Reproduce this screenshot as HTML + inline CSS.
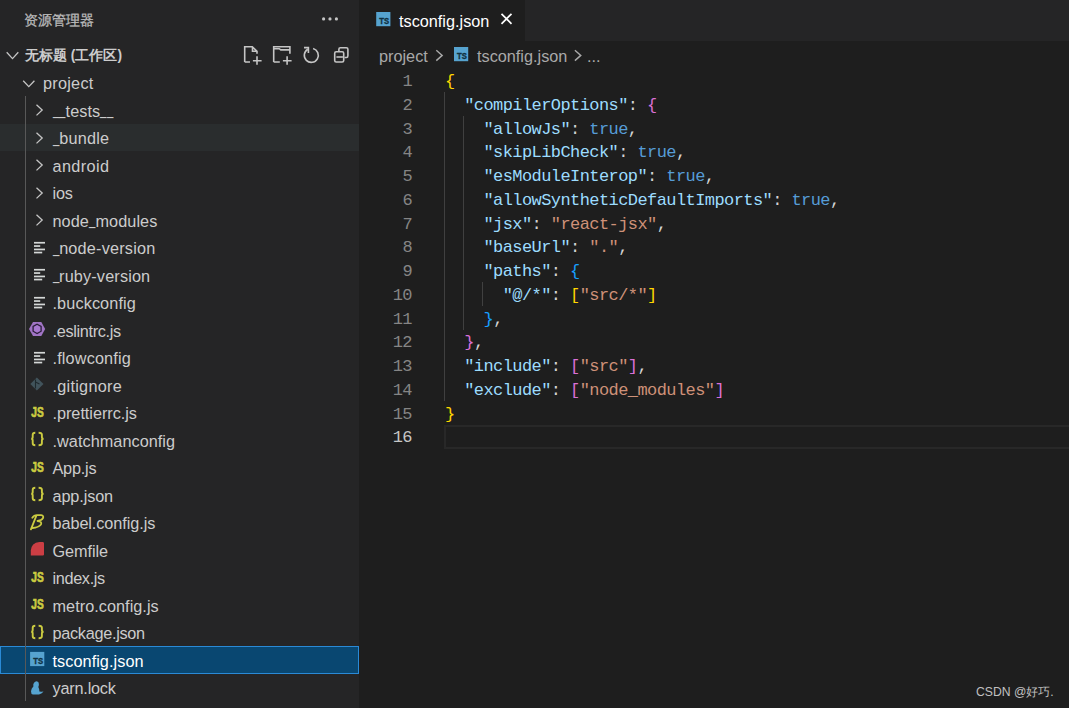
<!DOCTYPE html>
<html><head><meta charset="utf-8">
<style>
*{box-sizing:border-box;margin:0;padding:0}
html,body{width:1069px;height:708px;overflow:hidden;background:#1e1e1e;font-family:"Liberation Sans",sans-serif}
#side{position:absolute;left:0;top:0;width:359px;height:708px;background:#252526}
.t{position:absolute;white-space:pre}
.row{position:absolute;left:0;width:359px;height:27.5px}
.name{position:absolute;top:1.5px;line-height:27.5px;font-size:16.25px;color:#cccccc;white-space:pre}
.code{position:absolute;left:445px;font-family:"Liberation Mono",monospace;font-size:17px;letter-spacing:-0.58px;line-height:23.75px;white-space:pre;color:#d4d4d4;padding-top:1.5px}
.ln{position:absolute;font-family:"Liberation Mono",monospace;font-size:17px;letter-spacing:-0.58px;line-height:23.75px;text-align:right;width:60px;left:352px;padding-top:1.5px}
.us{display:inline-block;transform:scaleX(0.7);transform-origin:0 0;margin-right:-2.6px;position:relative;top:-1.2px}
.k{color:#9cdcfe}.b{color:#569cd6}.s{color:#ce9178}.y{color:#ffd700}.p{color:#da70d6}.u{color:#179fff}
</style></head><body>
<div id="side">
  <div class="t" style="left:24px;top:12px;font-size:13.75px;color:#bbbbbb;-webkit-text-stroke:0.3px #bbbbbb">资源管理器</div>
  <svg style="position:absolute;left:318px;top:14px" width="22" height="10" viewBox="318 14 22 10"><circle cx="323.6" cy="18.9" r="1.6" fill="#c5c5c5"/><circle cx="330" cy="18.9" r="1.6" fill="#c5c5c5"/><circle cx="336.4" cy="18.9" r="1.6" fill="#c5c5c5"/></svg>
  <div class="row" style="top:41px">
    <svg style="position:absolute;left:0;top:0" width="24" height="27.5" viewBox="0 0 24 27.5"><path d="M6.7 11.3 L12.5 17.6 L18.3 11.3" fill="none" stroke="#c5c5c5" stroke-width="1.3"/></svg>
    <div class="name" style="left:25px;top:1.2px;font-size:13.75px;font-weight:bold">无标题 (工作区)</div>
  </div>
  <svg style="position:absolute;left:0;top:41px" width="359" height="27.5" viewBox="0 41 359 27.5">
<path d="M244.7 62 V46.7 H252.3 L257 51.4 V53.8 M252.5 46.7 V51.3 H257 M244.7 62 H250" fill="none" stroke="#c5c5c5" stroke-width="1.6"/>
<path d="M257 56.3 V64.7 M252.9 60.8 H261.6" fill="none" stroke="#c5c5c5" stroke-width="1.6"/>
<path d="M273.7 62 V46.7 H289.9 V53.8 M273.7 48.7 H279.2 L280.8 49.9 H289.9 M273.7 62 H279.8" fill="none" stroke="#c5c5c5" stroke-width="1.6"/>
<path d="M287.1 56.3 V64.7 M282.9 60.8 H291.6" fill="none" stroke="#c5c5c5" stroke-width="1.6"/>
<path d="M313.1 48.6 A7 7 0 1 1 307.8 49.3" fill="none" stroke="#c5c5c5" stroke-width="1.6"/>
<path d="M304 47.6 H308.4 V53" fill="none" stroke="#c5c5c5" stroke-width="1.6"/>
<path d="M338.9 51 V49.3 Q338.9 47.8 340.4 47.8 H346.4 Q347.9 47.8 347.9 49.3 V55.8 Q347.9 57.5 346.4 57.5 H344.5" fill="none" stroke="#c5c5c5" stroke-width="1.6"/>
<rect x="334.7" y="51.8" width="9" height="10.2" rx="1.5" fill="none" stroke="#c5c5c5" stroke-width="1.6"/>
<path d="M336.4 57 H342.9" fill="none" stroke="#c5c5c5" stroke-width="1.6"/>
</svg>
  <div class="row" style="top:68.5px;"><svg style="position:absolute;left:0;top:0" width="60" height="27.5" viewBox="0 0 60 27.5"><path d="M23.2 11.8 L28.8 17.6 L34.4 11.8" fill="none" stroke="#c5c5c5" stroke-width="1.3"/></svg><div class="name" style="left:43px;color:#cccccc;letter-spacing:0.250px">project</div></div><div class="row" style="top:96.0px;"><svg style="position:absolute;left:0;top:0" width="60" height="27.5" viewBox="0 0 60 27.5"><path d="M36.5 8.7 L42.2 14 L36.5 19.4" fill="none" stroke="#c5c5c5" stroke-width="1.3"/></svg><div class="name" style="left:52.5px;color:#cccccc;letter-spacing:0.075px"><span class="us">_</span><span class="us">_</span>tests<span class="us">_</span><span class="us">_</span></div></div><div class="row" style="top:123.5px;background:#2a2d2e;"><svg style="position:absolute;left:0;top:0" width="60" height="27.5" viewBox="0 0 60 27.5"><path d="M36.5 8.7 L42.2 14 L36.5 19.4" fill="none" stroke="#c5c5c5" stroke-width="1.3"/></svg><div class="name" style="left:52.5px;color:#cccccc;letter-spacing:0.217px"><span class="us">_</span>bundle</div></div><div class="row" style="top:151.0px;"><svg style="position:absolute;left:0;top:0" width="60" height="27.5" viewBox="0 0 60 27.5"><path d="M36.5 8.7 L42.2 14 L36.5 19.4" fill="none" stroke="#c5c5c5" stroke-width="1.3"/></svg><div class="name" style="left:52.5px;color:#cccccc;letter-spacing:0.383px">android</div></div><div class="row" style="top:178.5px;"><svg style="position:absolute;left:0;top:0" width="60" height="27.5" viewBox="0 0 60 27.5"><path d="M36.5 8.7 L42.2 14 L36.5 19.4" fill="none" stroke="#c5c5c5" stroke-width="1.3"/></svg><div class="name" style="left:52.5px;color:#cccccc;letter-spacing:-0.150px">ios</div></div><div class="row" style="top:206.0px;"><svg style="position:absolute;left:0;top:0" width="60" height="27.5" viewBox="0 0 60 27.5"><path d="M36.5 8.7 L42.2 14 L36.5 19.4" fill="none" stroke="#c5c5c5" stroke-width="1.3"/></svg><div class="name" style="left:52.5px;color:#cccccc;letter-spacing:0.073px">node<span class="us">_</span>modules</div></div><div class="row" style="top:233.5px;"><svg style="position:absolute;left:0;top:0" width="60" height="27.5" viewBox="0 0 60 27.5"><g fill="#d4d7d6"><rect x="34" y="7.9" width="11" height="1.7"/><rect x="34" y="11.2" width="6.2" height="1.7"/><rect x="34" y="14.6" width="11" height="1.7"/><rect x="34" y="17.7" width="8.2" height="1.7"/></g></svg><div class="name" style="left:52.5px;color:#cccccc;letter-spacing:0.192px"><span class="us">_</span>node-version</div></div><div class="row" style="top:261.0px;"><svg style="position:absolute;left:0;top:0" width="60" height="27.5" viewBox="0 0 60 27.5"><g fill="#d4d7d6"><rect x="34" y="7.9" width="11" height="1.7"/><rect x="34" y="11.2" width="6.2" height="1.7"/><rect x="34" y="14.6" width="11" height="1.7"/><rect x="34" y="17.7" width="8.2" height="1.7"/></g></svg><div class="name" style="left:52.5px;color:#cccccc;letter-spacing:0.150px"><span class="us">_</span>ruby-version</div></div><div class="row" style="top:288.5px;"><svg style="position:absolute;left:0;top:0" width="60" height="27.5" viewBox="0 0 60 27.5"><g fill="#d4d7d6"><rect x="34" y="7.9" width="11" height="1.7"/><rect x="34" y="11.2" width="6.2" height="1.7"/><rect x="34" y="14.6" width="11" height="1.7"/><rect x="34" y="17.7" width="8.2" height="1.7"/></g></svg><div class="name" style="left:52.5px;color:#cccccc;letter-spacing:0.110px">.buckconfig</div></div><div class="row" style="top:316.0px;"><svg style="position:absolute;left:0;top:0" width="60" height="27.5" viewBox="0 0 60 27.5"><polygon points="29,12.9 33,5.9 41.3,5.9 45.2,12.9 41.3,20 33,20" fill="#a074c4"/><polygon points="37.1,8.2 41.1,10.5 41.1,15.2 37.1,17.5 33.1,15.2 33.1,10.5" fill="#a878d0" stroke="#2b1d3a" stroke-width="1.3"/></svg><div class="name" style="left:52.5px;color:#cccccc;letter-spacing:-0.327px">.eslintrc.js</div></div><div class="row" style="top:343.5px;"><svg style="position:absolute;left:0;top:0" width="60" height="27.5" viewBox="0 0 60 27.5"><g fill="#d4d7d6"><rect x="34" y="7.9" width="11" height="1.7"/><rect x="34" y="11.2" width="6.2" height="1.7"/><rect x="34" y="14.6" width="11" height="1.7"/><rect x="34" y="17.7" width="8.2" height="1.7"/></g></svg><div class="name" style="left:52.5px;color:#cccccc;letter-spacing:0.150px">.flowconfig</div></div><div class="row" style="top:371.0px;"><svg style="position:absolute;left:0;top:0" width="60" height="27.5" viewBox="0 0 60 27.5"><polygon points="36.9,6.4 43.5,13 36.9,19.6 30.3,13" fill="#41535b"/><path d="M35.5 8.5 L35.5 17.5 M35.5 11 L39.5 13" stroke="#1f2a2e" stroke-width="1.1" fill="none"/></svg><div class="name" style="left:52.5px;color:#cccccc;letter-spacing:0.267px">.gitignore</div></div><div class="row" style="top:398.5px;"><svg style="position:absolute;left:0;top:0" width="60" height="27.5" viewBox="0 0 60 27.5"><text x="31.3" y="18.3" textLength="12.4" lengthAdjust="spacingAndGlyphs" font-family="Liberation Sans" font-weight="bold" font-size="14.2" fill="#cbcb41" stroke="#cbcb41" stroke-width="0.7">JS</text></svg><div class="name" style="left:52.5px;color:#cccccc;letter-spacing:-0.031px">.prettierrc.js</div></div><div class="row" style="top:426.0px;"><svg style="position:absolute;left:0;top:0" width="60" height="27.5" viewBox="0 0 60 27.5"><g fill="none" stroke="#cbcb41" stroke-width="1.9"><path d="M35.3 6.7 Q32.7 6.7 32.7 8.7 V11.2 Q32.7 12.8 31.2 12.8 Q32.7 12.8 32.7 14.4 V17.3 Q32.7 19.2 35.3 19.2"/><path d="M38.6 6.7 Q41.9 6.7 41.9 8.7 V11.2 Q41.9 12.8 43.6 12.8 Q41.9 12.8 41.9 14.4 V17.3 Q41.9 19.2 38.6 19.2"/></g></svg><div class="name" style="left:52.5px;color:#cccccc;letter-spacing:0.043px">.watchmanconfig</div></div><div class="row" style="top:453.5px;"><svg style="position:absolute;left:0;top:0" width="60" height="27.5" viewBox="0 0 60 27.5"><text x="31.3" y="18.3" textLength="12.4" lengthAdjust="spacingAndGlyphs" font-family="Liberation Sans" font-weight="bold" font-size="14.2" fill="#cbcb41" stroke="#cbcb41" stroke-width="0.7">JS</text></svg><div class="name" style="left:52.5px;color:#cccccc;letter-spacing:-0.220px">App.js</div></div><div class="row" style="top:481.0px;"><svg style="position:absolute;left:0;top:0" width="60" height="27.5" viewBox="0 0 60 27.5"><g fill="none" stroke="#cbcb41" stroke-width="1.9"><path d="M35.3 6.7 Q32.7 6.7 32.7 8.7 V11.2 Q32.7 12.8 31.2 12.8 Q32.7 12.8 32.7 14.4 V17.3 Q32.7 19.2 35.3 19.2"/><path d="M38.6 6.7 Q41.9 6.7 41.9 8.7 V11.2 Q41.9 12.8 43.6 12.8 Q41.9 12.8 41.9 14.4 V17.3 Q41.9 19.2 38.6 19.2"/></g></svg><div class="name" style="left:52.5px;color:#cccccc;letter-spacing:-0.114px">app.json</div></div><div class="row" style="top:508.5px;"><svg style="position:absolute;left:0;top:0" width="60" height="27.5" viewBox="0 0 60 27.5"><path d="M32.3 8.8 Q34 6.2 37 6.2 L41.2 6.2 Q44 6.6 43 9.2 Q41.8 11.5 37.5 12 Q42.3 12.4 41 15.5 Q38.5 18.5 32.5 19 M30.9 20.4 L36.4 6.6" fill="none" stroke="#cbcb41" stroke-width="1.8" stroke-linecap="round" stroke-linejoin="round"/></svg><div class="name" style="left:52.5px;color:#cccccc;letter-spacing:-0.079px">babel.config.js</div></div><div class="row" style="top:536.0px;"><svg style="position:absolute;left:0;top:0" width="60" height="27.5" viewBox="0 0 60 27.5"><path d="M30.8 19.4 L30.8 14.5 Q31.3 6.6 39.5 5.9 L43 5.9 Q44 6.1 44 7.3 L44 18.6 Q44 19.4 43.2 19.4 Z" fill="#cc3e44"/></svg><div class="name" style="left:52.5px;color:#cccccc;letter-spacing:-0.083px">Gemfile</div></div><div class="row" style="top:563.5px;"><svg style="position:absolute;left:0;top:0" width="60" height="27.5" viewBox="0 0 60 27.5"><text x="31.3" y="18.3" textLength="12.4" lengthAdjust="spacingAndGlyphs" font-family="Liberation Sans" font-weight="bold" font-size="14.2" fill="#cbcb41" stroke="#cbcb41" stroke-width="0.7">JS</text></svg><div class="name" style="left:52.5px;color:#cccccc;letter-spacing:-0.343px">index.js</div></div><div class="row" style="top:591.0px;"><svg style="position:absolute;left:0;top:0" width="60" height="27.5" viewBox="0 0 60 27.5"><text x="31.3" y="18.3" textLength="12.4" lengthAdjust="spacingAndGlyphs" font-family="Liberation Sans" font-weight="bold" font-size="14.2" fill="#cbcb41" stroke="#cbcb41" stroke-width="0.7">JS</text></svg><div class="name" style="left:52.5px;color:#cccccc;letter-spacing:0.036px">metro.config.js</div></div><div class="row" style="top:618.5px;"><svg style="position:absolute;left:0;top:0" width="60" height="27.5" viewBox="0 0 60 27.5"><g fill="none" stroke="#cbcb41" stroke-width="1.9"><path d="M35.3 6.7 Q32.7 6.7 32.7 8.7 V11.2 Q32.7 12.8 31.2 12.8 Q32.7 12.8 32.7 14.4 V17.3 Q32.7 19.2 35.3 19.2"/><path d="M38.6 6.7 Q41.9 6.7 41.9 8.7 V11.2 Q41.9 12.8 43.6 12.8 Q41.9 12.8 41.9 14.4 V17.3 Q41.9 19.2 38.6 19.2"/></g></svg><div class="name" style="left:52.5px;color:#cccccc;letter-spacing:-0.282px">package.json</div></div><div class="row" style="top:646.0px;background:#094771;"><div style="position:absolute;left:0;top:0;right:0;bottom:0;border:1px solid #2a8ad6"></div><svg style="position:absolute;left:0;top:0" width="60" height="27.5" viewBox="0 0 60 27.5"><g transform="translate(30.1,5.9) scale(1.0)"><rect x="0" y="0" width="14.2" height="14.2" fill="#56a3cf"/><text x="3.1" y="12.0" textLength="9.8" lengthAdjust="spacingAndGlyphs" font-family="Liberation Sans" font-weight="bold" font-size="8.8" fill="#10303f" stroke="#10303f" stroke-width="0.35">TS</text></g></svg><div class="name" style="left:52.5px;color:#ffffff;letter-spacing:0.058px">tsconfig.json</div></div><div class="row" style="top:673.5px;"><svg style="position:absolute;left:0;top:0" width="60" height="27.5" viewBox="0 0 60 27.5"><path d="M36.6 7.3 Q38.9 7.6 38.9 10 Q38.9 11.8 38.3 13 Q39.4 14.6 39.4 17.6 Q41.2 17.9 43.5 17.6 Q42.3 19.8 39 20.5 L33 20.5 Q30.9 20.1 31 17.2 Q31.4 14.2 33.4 12.6 Q32.9 10.2 33.9 8.9 Q35 7.3 36.6 7.3 Z" fill="#56a3cf"/></svg><div class="name" style="left:52.5px;color:#cccccc;letter-spacing:-0.200px">yarn.lock</div></div>
  <div style="position:absolute;left:25px;top:96px;width:1px;height:605px;background:#585858"></div>
</div>
<div style="position:absolute;left:359px;top:0;width:710px;height:40.5px;background:#252526"></div>
<div style="position:absolute;left:359px;top:0;width:166px;height:40.5px;background:#1e1e1e"></div>
<svg style="position:absolute;left:359px;top:0" width="710" height="70" viewBox="359 0 710 70">
  <g transform="translate(376.2,12) scale(1.0)"><rect x="0" y="0" width="14.2" height="14.2" fill="#56a3cf"/><text x="3.1" y="12.0" textLength="9.8" lengthAdjust="spacingAndGlyphs" font-family="Liberation Sans" font-weight="bold" font-size="8.8" fill="#10303f" stroke="#10303f" stroke-width="0.35">TS</text></g>
  <path d="M501.5 13.8 L511.5 23.8 M511.5 13.8 L501.5 23.8" stroke="#ffffff" stroke-width="1.7"/>
  <path d="M436.3 50.2 L442.2 55.4 L436.3 60.6" fill="none" stroke="#a9a9a9" stroke-width="1.4"/>
  <g transform="translate(454,47) scale(1.0)"><rect x="0" y="0" width="14.2" height="14.2" fill="#56a3cf"/><text x="3.1" y="12.0" textLength="9.8" lengthAdjust="spacingAndGlyphs" font-family="Liberation Sans" font-weight="bold" font-size="8.8" fill="#10303f" stroke="#10303f" stroke-width="0.35">TS</text></g>
  <path d="M574.9 50.2 L580.8 55.4 L574.9 60.6" fill="none" stroke="#a9a9a9" stroke-width="1.4"/>
</svg>
<div class="t" style="left:399px;top:1px;line-height:41px;font-size:16.25px;color:#ffffff">tsconfig.json</div>
<div class="t" style="left:379px;top:42.5px;line-height:27.5px;font-size:16.25px;color:#a9a9a9">project</div>
<div class="t" style="left:477px;top:42.5px;line-height:27.5px;font-size:16.25px;color:#a9a9a9">tsconfig.json</div>
<div class="t" style="left:587px;top:42.5px;line-height:27.5px;font-size:16.25px;color:#a9a9a9">...</div>
<div style="position:absolute;left:444px;top:424.75px;width:625px;height:23.75px;border:2px solid #282828;border-right:none"></div>
<div style="position:absolute;left:444.00px;top:92.25px;width:1px;height:308.75px;background:#404040"></div><div style="position:absolute;left:463.24px;top:116.0px;width:1px;height:213.75px;background:#404040"></div><div style="position:absolute;left:482.48px;top:282.25px;width:1px;height:23.75px;background:#404040"></div>
<div class="ln" style="top:68.5px;color:#858585">1</div><div class="code" style="top:68.5px"><span class="y">{</span></div><div class="ln" style="top:92.25px;color:#858585">2</div><div class="code" style="top:92.25px">  <span class="k">"compilerOptions"</span>: <span class="p">{</span></div><div class="ln" style="top:116.0px;color:#858585">3</div><div class="code" style="top:116.0px">    <span class="k">"allowJs"</span>: <span class="b">true</span>,</div><div class="ln" style="top:139.75px;color:#858585">4</div><div class="code" style="top:139.75px">    <span class="k">"skipLibCheck"</span>: <span class="b">true</span>,</div><div class="ln" style="top:163.5px;color:#858585">5</div><div class="code" style="top:163.5px">    <span class="k">"esModuleInterop"</span>: <span class="b">true</span>,</div><div class="ln" style="top:187.25px;color:#858585">6</div><div class="code" style="top:187.25px">    <span class="k">"allowSyntheticDefaultImports"</span>: <span class="b">true</span>,</div><div class="ln" style="top:211.0px;color:#858585">7</div><div class="code" style="top:211.0px">    <span class="k">"jsx"</span>: <span class="s">"react-jsx"</span>,</div><div class="ln" style="top:234.75px;color:#858585">8</div><div class="code" style="top:234.75px">    <span class="k">"baseUrl"</span>: <span class="s">"."</span>,</div><div class="ln" style="top:258.5px;color:#858585">9</div><div class="code" style="top:258.5px">    <span class="k">"paths"</span>: <span class="u">{</span></div><div class="ln" style="top:282.25px;color:#858585">10</div><div class="code" style="top:282.25px">      <span class="k">"@/*"</span>: <span class="y">[</span><span class="s">"src/*"</span><span class="y">]</span></div><div class="ln" style="top:306.0px;color:#858585">11</div><div class="code" style="top:306.0px">    <span class="u">}</span>,</div><div class="ln" style="top:329.75px;color:#858585">12</div><div class="code" style="top:329.75px">  <span class="p">}</span>,</div><div class="ln" style="top:353.5px;color:#858585">13</div><div class="code" style="top:353.5px">  <span class="k">"include"</span>: <span class="p">[</span><span class="s">"src"</span><span class="p">]</span>,</div><div class="ln" style="top:377.25px;color:#858585">14</div><div class="code" style="top:377.25px">  <span class="k">"exclude"</span>: <span class="p">[</span><span class="s">"node_modules"</span><span class="p">]</span></div><div class="ln" style="top:401.0px;color:#858585">15</div><div class="code" style="top:401.0px"><span class="y">}</span></div><div class="ln" style="top:424.75px;color:#c6c6c6">16</div><div class="code" style="top:424.75px"></div>
<div class="t" style="left:976px;top:684px;font-size:12.2px;color:#c0c0c0">CSDN @好巧.</div>
</body></html>
